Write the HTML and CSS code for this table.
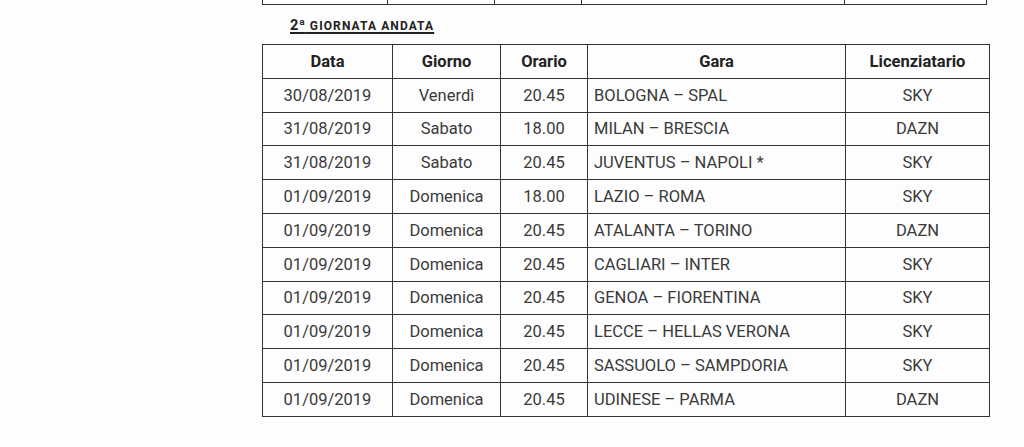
FILE: index.html
```html
<!DOCTYPE html>
<html lang="it">
<head>
<meta charset="utf-8">
<link rel="stylesheet" href="styles.css">
</head>
<body>
<div class="page">
  <table class="prev">
    <tr><td class="p1"></td><td class="p2"></td><td class="p3"></td><td class="p4"></td><td class="p5"></td></tr>
  </table>
  <h2 class="title"><span class="num">2ª</span> GIORNATA ANDATA</h2>
  <table class="cal">
    <colgroup>
      <col class="c1"><col class="c2"><col class="c3"><col class="c4"><col class="c5">
    </colgroup>
    <thead>
      <tr><th>Data</th><th>Giorno</th><th>Orario</th><th>Gara</th><th>Licenziatario</th></tr>
    </thead>
    <tbody>
      <tr><td>30/08/2019</td><td>Venerdì</td><td>20.45</td><td class="gara">BOLOGNA – SPAL</td><td>SKY</td></tr>
      <tr><td>31/08/2019</td><td>Sabato</td><td>18.00</td><td class="gara">MILAN – BRESCIA</td><td>DAZN</td></tr>
      <tr><td>31/08/2019</td><td>Sabato</td><td>20.45</td><td class="gara">JUVENTUS – NAPOLI *</td><td>SKY</td></tr>
      <tr><td>01/09/2019</td><td>Domenica</td><td>18.00</td><td class="gara">LAZIO – ROMA</td><td>SKY</td></tr>
      <tr><td>01/09/2019</td><td>Domenica</td><td>20.45</td><td class="gara">ATALANTA – TORINO</td><td>DAZN</td></tr>
      <tr><td>01/09/2019</td><td>Domenica</td><td>20.45</td><td class="gara">CAGLIARI – INTER</td><td>SKY</td></tr>
      <tr><td>01/09/2019</td><td>Domenica</td><td>20.45</td><td class="gara">GENOA – FIORENTINA</td><td>SKY</td></tr>
      <tr><td>01/09/2019</td><td>Domenica</td><td>20.45</td><td class="gara">LECCE – HELLAS VERONA</td><td>SKY</td></tr>
      <tr><td>01/09/2019</td><td>Domenica</td><td>20.45</td><td class="gara">SASSUOLO – SAMPDORIA</td><td>SKY</td></tr>
      <tr><td>01/09/2019</td><td>Domenica</td><td>20.45</td><td class="gara">UDINESE – PARMA</td><td>DAZN</td></tr>
    </tbody>
  </table>
</div>
</body>
</html>
```

FILE: styles.css
```css
html, body {
  margin: 0;
  padding: 0;
  background: #fdfdfd;
}
body {
  font-family: Roboto, "Liberation Sans", sans-serif;
  color: #3a3a3a;
}
.page {
  padding-left: 262px;
}
.prev {
  border-collapse: collapse;
  table-layout: fixed;
}
.prev td {
  height: 4px;
  padding: 0;
  border: 1.5px solid #333;
  border-top: none;
}
.p1 { width: 124px; }
.p2 { width: 106px; }
.p3 { width: 86px; }
.p4 { width: 262px; }
.p5 { width: 141px; }

.title {
  margin: 12px 0 0 28px;
  font-size: 12px;
  font-weight: 700;
  color: #222;
  letter-spacing: 1.1px;
  text-decoration: underline;
  text-decoration-thickness: 1.5px;
  text-underline-offset: 2px;
  height: 27px;
  line-height: 18px;
}
.title .num {
  font-size: 14.5px;
  letter-spacing: 0.5px;
}

.cal {
  border-collapse: collapse;
  table-layout: fixed;
  width: 727px;
}
.c1 { width: 130px; }
.c2 { width: 108px; }
.c3 { width: 87px; }
.c4 { width: 258px; }
.c5 { width: 144px; }
.cal th, .cal td {
  border: 1.5px solid #333;
  height: 32.8px;
  padding: 0;
  text-align: center;
  font-size: 16.5px;
  white-space: nowrap;
}
.cal th {
  font-weight: 700;
  color: #222;
}
.cal td.gara {
  text-align: left;
  padding-left: 6px;
}
```
